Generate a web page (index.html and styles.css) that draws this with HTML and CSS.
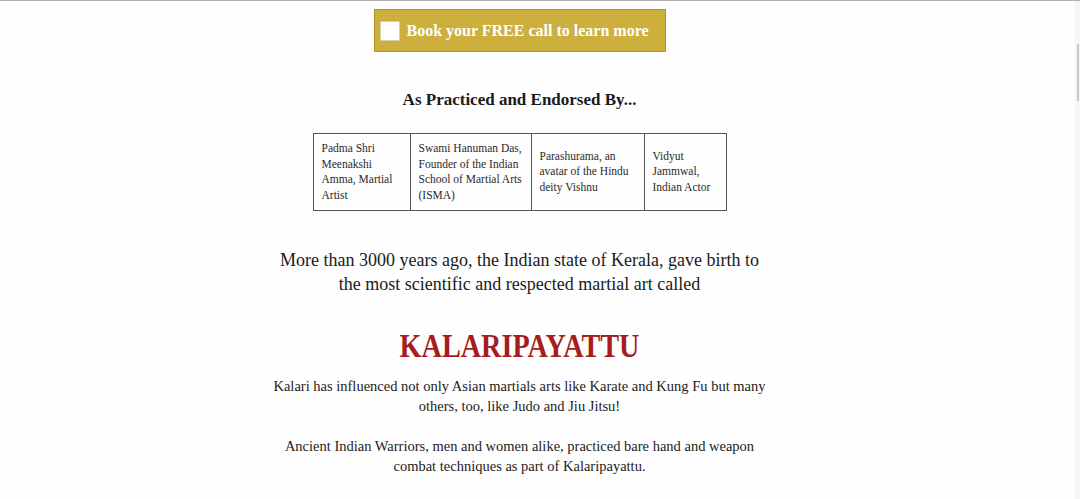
FILE: index.html
```html
<!DOCTYPE html>
<html lang="en">
<head>
<meta charset="utf-8">
<title>Kalaripayattu</title>
<link rel="stylesheet" href="styles.css">
</head>
<body>
<div class="page">
  <main class="content">
    <a class="cta" href="#">
      <span class="cta-box"></span>
      <span class="cta-text">Book your FREE call to learn more</span>
    </a>

    <h2 class="endorse-title">As Practiced and Endorsed By...</h2>

    <table class="endorse">
      <tr>
        <td class="c1">Padma Shri Meenakshi Amma, Martial Artist</td>
        <td class="c2">Swami Hanuman Das, Founder of the Indian School of Martial Arts (ISMA)</td>
        <td class="c3">Parashurama, an avatar of the Hindu deity Vishnu</td>
        <td class="c4">Vidyut Jammwal, Indian Actor</td>
      </tr>
    </table>

    <p class="lead">More than 3000 years ago, the Indian state of Kerala, gave birth to the most scientific and respected martial art called</p>

    <h1 class="title"><span class="title-text">KALARIPAYATTU</span></h1>

    <p class="body-text">Kalari has influenced not only Asian martials arts like Karate and Kung Fu but many others, too, like Judo and Jiu Jitsu!</p>

    <p class="body-text">Ancient Indian Warriors, men and women alike, practiced bare hand and weapon combat techniques as part of Kalaripayattu.</p>
  </main>
</div>
<div class="scrollbar"><div class="scroll-thumb"></div></div>
</body>
</html>
```

FILE: styles.css
```css
html, body {
  margin: 0;
  padding: 0;
  height: 100%;
  overflow: hidden;
}
body {
  background: #fefefe;
  color: #1c1c1c;
  font-family: "Liberation Serif", "DejaVu Serif", serif;
  border-top: 1px solid #b0b0b0;
  box-sizing: border-box;
}
.page {
  padding-right: 41px;
}
.content {
  display: flex;
  flex-direction: column;
  align-items: center;
  text-align: center;
}
.cta {
  margin-top: 8px;
  width: 292px;
  height: 43px;
  box-sizing: border-box;
  background: #cdaf3e;
  border: 1px solid #b39524;
  display: flex;
  align-items: center;
  padding-left: 5px;
  gap: 7px;
  text-decoration: none;
}
.cta-box {
  width: 18px;
  height: 18px;
  background: #fff;
  border: 1px solid #d8cfa8;
  border-radius: 1px;
  flex: none;
}
.cta-text {
  color: #fff;
  font-weight: bold;
  font-size: 16px;
  white-space: nowrap;
}
.endorse-title {
  margin: 36px 0 0;
  font-size: 17px;
  font-weight: bold;
  color: #1a1a1a;
  line-height: 24px;
}
.endorse {
  margin-top: 21px;
  border-collapse: collapse;
  border: 1px solid #555;
  text-align: left;
  font-size: 11.5px;
  line-height: 15.5px;
  color: #2a2a2a;
}
.endorse td {
  border: 1px solid #555;
  padding: 7px 8px;
  vertical-align: middle;
  box-sizing: border-box;
}
.endorse .c1 { width: 97px; }
.endorse .c2 { width: 121px; }
.endorse .c3 { width: 113px; }
.endorse .c4 { width: 82px; }
.lead {
  margin: 37px 0 0;
  width: 500px;
  font-size: 18px;
  line-height: 24px;
  color: #1a1a1a;
}
.title {
  margin: 30px 0 0;
  font-size: 34px;
  line-height: 40px;
  font-weight: bold;
  color: #a51d1d;
}
.title-text {
  display: inline-block;
  transform: scaleX(0.83);
}
.body-text {
  margin: 10px 0 0;
  width: 500px;
  font-size: 14.5px;
  line-height: 20px;
  color: #1c1c1c;
}
.body-text + .body-text {
  margin-top: 19.5px;
}
.scrollbar {
  position: fixed;
  top: 1px;
  right: 0;
  width: 5px;
  bottom: 0;
  background: #f6f6f6;
}
.scroll-thumb {
  margin-top: 43px;
  margin-left: 2px;
  width: 2px;
  height: 57px;
  background: #c8c8c8;
}
```
